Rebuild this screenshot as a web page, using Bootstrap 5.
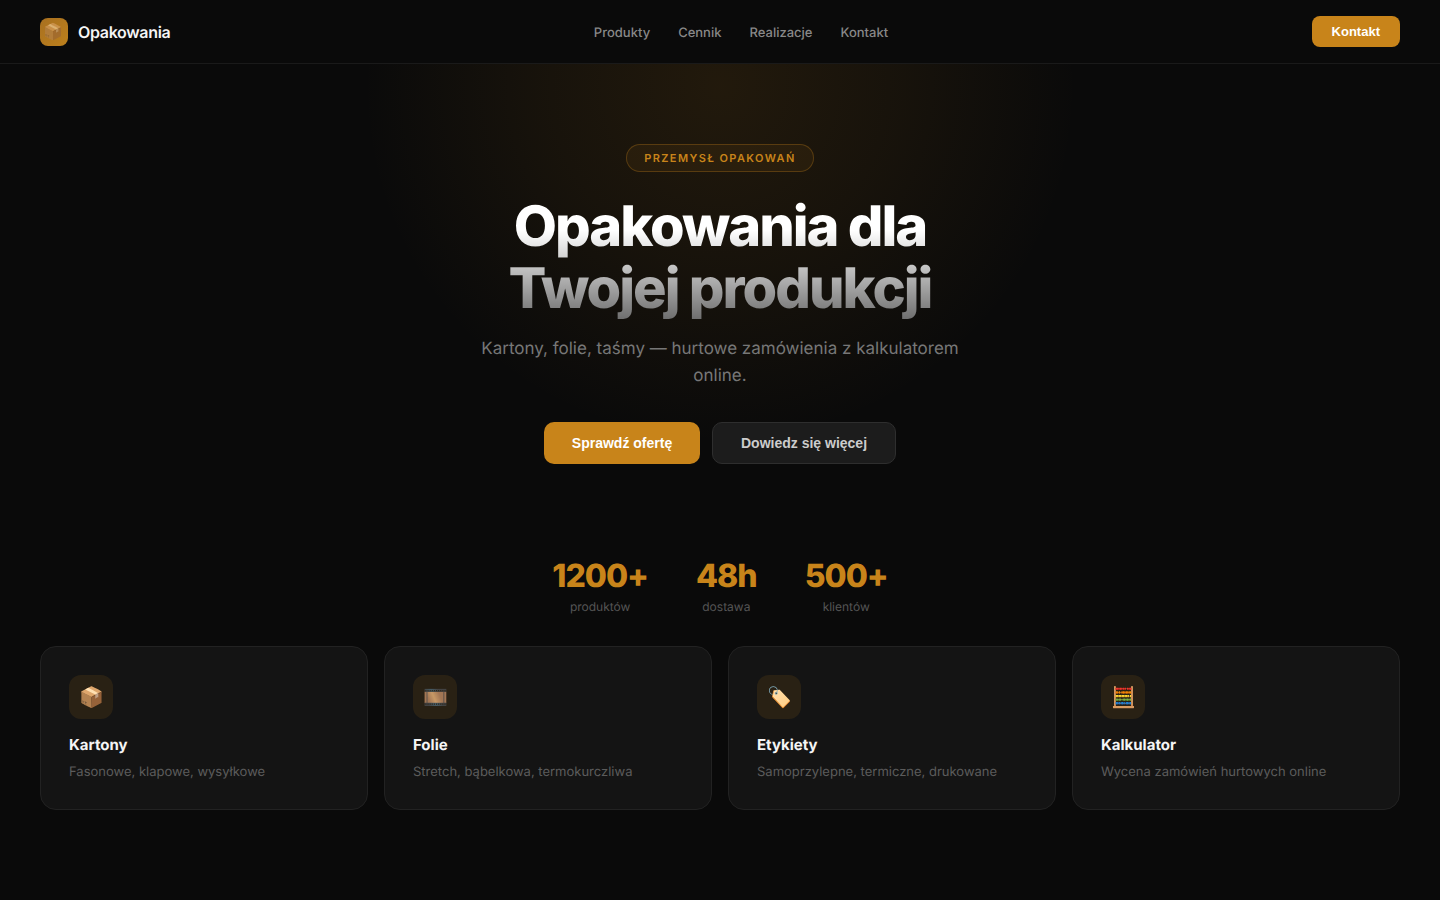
<!DOCTYPE html>
<html lang="pl">
<head>
<meta charset="utf-8">
<title>Opakowania</title>
<link rel="stylesheet" href="https://cdn.jsdelivr.net/npm/bootstrap@5.3.0/dist/css/bootstrap.min.css">
<style>
html,body{background:#0a0a0a;}
body{font-family:Inter,"Liberation Sans",sans-serif;color:#fff;min-height:900px;text-rendering:geometricPrecision;}
.topbar{height:64px;padding:0 40px;border-bottom:1px solid #1a1a1a;background:#0a0a0a;}
.logo-wrap{gap:10px;}
.logo-box{width:28px;height:28px;border-radius:8px;background:linear-gradient(135deg,#a87020,#bd801c);padding:2px 0 0 3px;font-size:16px;line-height:22px;}
.logo-glyph{opacity:.55;}
.logo-name{font-size:16px;font-weight:600;color:#f5f5f5;letter-spacing:-.02em;}
.menu{gap:28px;}
.menu a{font-size:13px;line-height:20px;padding-top:3px;color:#888;text-decoration:none;font-weight:500;}
.btn-nav{font-family:"Liberation Sans",sans-serif;font-size:13px;font-weight:700;color:#fff;background:#c8841a;border:0;border-radius:8px;padding:0 20px;height:31px;}
.hero{padding-top:80px;background:radial-gradient(circle 357px at 50% 22px,rgba(200,132,26,.125),rgba(200,132,26,.07) 50%,transparent 100%);background-repeat:no-repeat;}
.pill{font-size:11px;font-weight:600;letter-spacing:1.4px;color:#c8841a;background:rgba(200,132,26,.08);border:1px solid rgba(200,132,26,.3);border-radius:100px;padding:6px 17px;line-height:14px;}
.headline{font-size:56px;font-weight:800;line-height:61.6px;letter-spacing:-2px;margin:24px 0 0;background:linear-gradient(180deg,#fff 28%,#6f6f6f 100%);-webkit-background-clip:text;background-clip:text;color:transparent;}
.sub{font-size:17px;line-height:27px;color:#777;width:520px;margin:17px 0 0;}
.acts{margin-top:32px;gap:12px;}
.btn-main,.btn-alt{font-family:"Liberation Sans",sans-serif;font-size:14px;font-weight:700;height:42px;border-radius:10px;}
.btn-main{width:156px;background:#c8841a;color:#fff;border:0;}
.btn-alt{width:184px;background:#1c1c1c;color:#ccc;border:1px solid #2e2e2e;}
.stats{margin-top:92px;gap:48px;}
.stat-num{font-size:32px;font-weight:800;color:#c8841a;line-height:39px;letter-spacing:-1px;}
.stat-lbl{font-size:12px;color:#555;line-height:15px;margin-top:4px;}
.tiles{display:grid;grid-template-columns:repeat(4,1fr);gap:16px;padding:0 40px;margin-top:32px;}
.tile{height:164px;background:#141414;border:1px solid #222;border-radius:16px;padding:28px;}
.tile-ico{width:44px;height:44px;border-radius:12px;background:rgba(200,132,26,.12);font-size:20px;line-height:44px;text-align:center;padding-left:2px;}
.tile-name{font-size:15px;font-weight:700;color:#f5f5f5;line-height:18px;margin-top:17px;}
.tile-desc{font-size:13px;color:#5c5c5c;line-height:20px;margin-top:8px;}
</style>
</head>
<body>
<nav class="topbar d-flex align-items-center justify-content-between">
  <div class="logo-wrap d-flex align-items-center"><div class="logo-box"><span class="logo-glyph">📦</span></div><span class="logo-name">Opakowania</span></div>
  <div class="menu d-flex"><a href="#">Produkty</a><a href="#">Cennik</a><a href="#">Realizacje</a><a href="#">Kontakt</a></div>
  <button class="btn-nav">Kontakt</button>
</nav>
<section class="hero d-flex flex-column align-items-center text-center">
  <span class="pill">PRZEMYSŁ OPAKOWAŃ</span>
  <h1 class="headline">Opakowania dla<br>Twojej produkcji</h1>
  <p class="sub">Kartony, folie, taśmy — hurtowe zamówienia z kalkulatorem online.</p>
  <div class="acts d-flex"><button class="btn-main">Sprawdź ofertę</button><button class="btn-alt">Dowiedz się więcej</button></div>
  <div class="stats d-flex">
    <div><div class="stat-num">1200+</div><div class="stat-lbl">produktów</div></div>
    <div><div class="stat-num">48h</div><div class="stat-lbl">dostawa</div></div>
    <div><div class="stat-num">500+</div><div class="stat-lbl">klientów</div></div>
  </div>
</section>
<section class="tiles">
  <div class="tile"><div class="tile-ico">📦</div><div class="tile-name">Kartony</div><div class="tile-desc">Fasonowe, klapowe, wysyłkowe</div></div>
  <div class="tile"><div class="tile-ico">🎞️</div><div class="tile-name">Folie</div><div class="tile-desc">Stretch, bąbelkowa, termokurczliwa</div></div>
  <div class="tile"><div class="tile-ico">🏷️</div><div class="tile-name">Etykiety</div><div class="tile-desc">Samoprzylepne, termiczne, drukowane</div></div>
  <div class="tile"><div class="tile-ico">🧮</div><div class="tile-name">Kalkulator</div><div class="tile-desc">Wycena zamówień hurtowych online</div></div>
</section>
<script src="https://cdn.jsdelivr.net/npm/bootstrap@5.3.0/dist/js/bootstrap.bundle.min.js"></script>
</body>
</html>
